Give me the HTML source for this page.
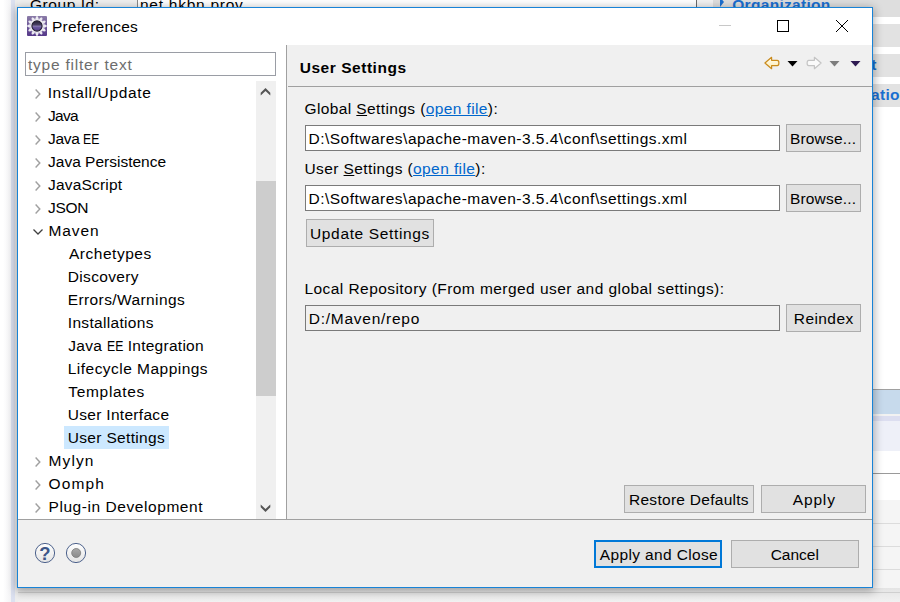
<!DOCTYPE html>
<html lang="en"><head><meta charset="utf-8"><title>Preferences</title>
<style>
html,body{margin:0;padding:0;}
body{width:900px;height:602px;overflow:hidden;position:relative;background:#fff;font-family:"Liberation Sans",sans-serif;font-size:16px;color:#000;}
.abs{position:absolute;}
.tx{position:absolute;white-space:pre;line-height:20px;font-size:15.5px;}
.lk{color:#0066cc;text-decoration:underline;}
u{text-decoration:underline;}
.ee{display:inline-block;width:16.4px;letter-spacing:0;transform:scaleX(0.79);transform-origin:0 50%;}
.btn{position:absolute;box-sizing:border-box;background:#e1e1e1;border:1px solid #adadad;}
.fld{position:absolute;box-sizing:border-box;background:#fff;border:1px solid #7a7a7a;}
.chev{position:absolute;width:8px;height:12px;}
</style></head><body>


<!-- background editor behind the dialog -->
<div class="abs" style="left:0;top:0;width:900px;height:602px;background:#fff;"></div>
<div class="abs" style="left:14px;top:0;width:124px;height:8px;background:#f0f0f0;"></div>
<div class="abs" style="left:11px;top:0;width:4px;height:602px;background:#dce1f0;"></div>
<div class="abs" style="left:137px;top:0;width:1px;height:8px;background:#8a8a8a;"></div>
<span id="bg1" class="tx " style="left:30.00px;top:-5.33px;letter-spacing:0.542px;">Group Id:</span><span id="bg2" class="tx " style="left:140.00px;top:-5.33px;letter-spacing:0.743px;">net.hkbn.prov</span>
<div class="abs" style="left:696px;top:0;width:1px;height:8px;background:#6a6a6a;"></div>
<div class="abs" style="left:697px;top:0;width:16px;height:8px;background:#f2f2f2;"></div>
<!-- right side stripes -->
<div class="abs" style="left:713px;top:0;width:187px;height:17px;background:#dedede;"></div>
<div class="abs" style="left:860px;top:24px;width:40px;height:23px;background:#e2e2e2;"></div>
<div class="abs" style="left:860px;top:54px;width:40px;height:23px;background:#e2e2e2;"></div>
<div class="abs" style="left:860px;top:84px;width:40px;height:23px;background:#e2e2e2;"></div>
<svg class="abs" style="left:719px;top:0;" width="8" height="8" viewBox="0 0 8 8"><path d="M1 -3 L5 2 L1 7 Z" fill="#1b6fd0"/></svg>
<span id="bg3" class="tx " style="left:732.26px;top:-5.33px;letter-spacing:0.305px;font-weight:700;color:#1a6fd0;">Organization</span>
<span id="bg4" class="tx" style="right:23.5px;top:54.5px;font-weight:700;color:#1a6fd0;">Issue Management</span>
<span class="tx" style="right:29px;top:84.5px;font-weight:700;color:#1a6fd0;">Continuous Integr</span>
<span id="bg5" class="tx" style="left:871px;top:84.5px;font-weight:700;color:#1a6fd0;letter-spacing:0.3px;">ation</span>
<div class="abs" style="left:873px;top:389px;width:27px;height:1px;background:#a0a0a0;"></div>
<div class="abs" style="left:873px;top:390px;width:27px;height:24px;background:#c7daec;"></div>
<div class="abs" style="left:873px;top:414px;width:27px;height:2px;background:#f2f2f2;"></div>
<div class="abs" style="left:873px;top:416px;width:27px;height:5px;background:#dcdef0;"></div>
<div class="abs" style="left:873px;top:421px;width:27px;height:30px;background:#eef0f8;"></div>
<div class="abs" style="left:873px;top:473px;width:27px;height:1px;background:#9a9a9a;"></div>
<div class="abs" style="left:873px;top:500px;width:27px;height:102px;background:#f5f5f5;"></div>
<div class="abs" style="left:873px;top:523px;width:27px;height:1px;background:#dcdcdc;"></div>
<div class="abs" style="left:873px;top:546px;width:27px;height:1px;background:#dcdcdc;"></div>
<div class="abs" style="left:873px;top:569px;width:27px;height:1px;background:#dcdcdc;"></div>
<div class="abs" style="left:15px;top:588px;width:885px;height:14px;background:linear-gradient(#e4e4e4,#f1f1f1);"></div>
<div class="abs" style="left:18px;top:592px;width:882px;height:1px;background:#cfcfcf;"></div>
<div class="abs" style="left:15px;top:0;width:3px;height:602px;background:#eeeeee;"></div>
<div class="abs" style="left:3px;top:0;width:8px;height:602px;background:linear-gradient(90deg,#ffffff,#f3f3f5);"></div>


<!-- dialog -->
<div id="win" class="abs" style="left:17px;top:7px;width:856px;height:581px;box-sizing:border-box;border:1px solid #1883d7;background:#f0f0f0;box-shadow:0 2px 9px 1px rgba(0,0,0,0.32);"></div>
<div class="abs" style="left:18px;top:8px;width:854px;height:37px;background:#fff;"></div>
<div class="abs" style="left:18px;top:45px;width:268px;height:474px;background:#fff;"></div>
<div class="abs" style="left:286px;top:45px;width:1px;height:474px;background:#a0a0a0;"></div>
<div class="abs" style="left:288px;top:86px;width:584px;height:1px;background:#a0a0a0;"></div>
<div class="abs" style="left:18px;top:519px;width:854px;height:1px;background:#a0a0a0;"></div>


<svg class="abs" style="left:27px;top:16px;" width="20" height="20" viewBox="0 0 20 20">
<defs><linearGradient id="pg" x1="0" y1="0" x2="0" y2="1"><stop offset="0" stop-color="#8b7ca8"/><stop offset="0.5" stop-color="#6c5797"/><stop offset="1" stop-color="#56388a"/></linearGradient>
<linearGradient id="cg" x1="0" y1="0" x2="0" y2="1"><stop offset="0" stop-color="#262236"/><stop offset="0.42" stop-color="#4a4266"/><stop offset="0.5" stop-color="#9183b6"/><stop offset="0.6" stop-color="#6b5aa0"/><stop offset="1" stop-color="#513c88"/></linearGradient></defs>
<rect x="0" y="0" width="20" height="20" rx="1" fill="url(#pg)"/>
<path d="M8.10 3.20 L9.25 0.30 L10.75 0.30 L11.90 3.20 Z M11.75 3.16 L14.20 1.22 L15.50 1.97 L15.05 5.06 Z M14.94 4.95 L18.03 4.50 L18.78 5.80 L16.84 8.25 Z M16.80 8.10 L19.70 9.25 L19.70 10.75 L16.80 11.90 Z M16.84 11.75 L18.78 14.20 L18.03 15.50 L14.94 15.05 Z M15.05 14.94 L15.50 18.03 L14.20 18.78 L11.75 16.84 Z M11.90 16.80 L10.75 19.70 L9.25 19.70 L8.10 16.80 Z M8.25 16.84 L5.80 18.78 L4.50 18.03 L4.95 14.94 Z M5.06 15.05 L1.97 15.50 L1.22 14.20 L3.16 11.75 Z M3.20 11.90 L0.30 10.75 L0.30 9.25 L3.20 8.10 Z M3.16 8.25 L1.22 5.80 L1.97 4.50 L5.06 4.95 Z M4.95 5.06 L4.50 1.97 L5.80 1.22 L8.25 3.16 Z" fill="#eceaf2"/>
<circle cx="10" cy="10" r="7.0" fill="#f6f5f9"/>
<circle cx="10" cy="10" r="5.1" fill="url(#cg)" stroke="#221d30" stroke-width="1.1"/>
</svg>

<span id="title" class="tx " style="left:52.00px;top:16.67px;letter-spacing:0.229px;">Preferences</span>

<div class="abs" style="left:719px;top:25px;width:12px;height:1px;background:#c8c8c8;"></div>
<div class="abs" style="left:777px;top:20px;width:12px;height:12px;box-sizing:border-box;border:1px solid #000;"></div>
<svg class="abs" style="left:835px;top:19px;" width="14" height="14" viewBox="0 0 14 14"><path d="M1 1 L13 13 M13 1 L1 13" stroke="#000" stroke-width="1" fill="none"/></svg>

<div class="fld" style="left:25px;top:52px;width:251px;height:24px;border-color:#9a9da5;"></div>
<span id="filter" class="tx " style="left:28.00px;top:54.67px;letter-spacing:0.776px;color:#6d6d6d;">type filter text</span>
<div class="abs" style="left:64px;top:426px;width:105px;height:23px;background:#cce8ff;"></div>
<svg class="abs" style="left:33.6px;top:88px;" width="8" height="12" viewBox="0 0 8 12"><path d="M1.6 1.5 L5.8 6 L1.6 10.5" stroke="#a0a0a0" stroke-width="1.45" fill="none"/></svg>
<span id="t0" class="tx " style="left:47.65px;top:82.67px;letter-spacing:0.644px;">Install/Update</span>
<svg class="abs" style="left:33.6px;top:111px;" width="8" height="12" viewBox="0 0 8 12"><path d="M1.6 1.5 L5.8 6 L1.6 10.5" stroke="#a0a0a0" stroke-width="1.45" fill="none"/></svg>
<span id="t1" class="tx " style="left:48.00px;top:105.67px;letter-spacing:-0.683px;">Java</span>
<svg class="abs" style="left:33.6px;top:134px;" width="8" height="12" viewBox="0 0 8 12"><path d="M1.6 1.5 L5.8 6 L1.6 10.5" stroke="#a0a0a0" stroke-width="1.45" fill="none"/></svg>
<span id="t2" class="tx " style="left:48.00px;top:128.67px;letter-spacing:-0.329px;">Java <span class="ee">EE</span></span>
<svg class="abs" style="left:33.6px;top:157px;" width="8" height="12" viewBox="0 0 8 12"><path d="M1.6 1.5 L5.8 6 L1.6 10.5" stroke="#a0a0a0" stroke-width="1.45" fill="none"/></svg>
<span id="t3" class="tx " style="left:48.00px;top:151.67px;letter-spacing:0.004px;">Java Persistence</span>
<svg class="abs" style="left:33.6px;top:180px;" width="8" height="12" viewBox="0 0 8 12"><path d="M1.6 1.5 L5.8 6 L1.6 10.5" stroke="#a0a0a0" stroke-width="1.45" fill="none"/></svg>
<span id="t4" class="tx " style="left:48.00px;top:174.67px;letter-spacing:0.197px;">JavaScript</span>
<svg class="abs" style="left:33.6px;top:203px;" width="8" height="12" viewBox="0 0 8 12"><path d="M1.6 1.5 L5.8 6 L1.6 10.5" stroke="#a0a0a0" stroke-width="1.45" fill="none"/></svg>
<span id="t5" class="tx " style="left:48.00px;top:197.67px;letter-spacing:-0.311px;">JSON</span>
<svg class="abs" style="left:31.5px;top:227.5px;" width="12" height="8" viewBox="0 0 12 8"><path d="M1.5 1.5 L6 6 L10.5 1.5" stroke="#404040" stroke-width="1.3" fill="none"/></svg>
<span id="t6" class="tx " style="left:48.50px;top:220.67px;letter-spacing:0.914px;">Maven</span>
<span id="t7" class="tx " style="left:68.95px;top:243.67px;letter-spacing:0.529px;">Archetypes</span>
<span id="t8" class="tx " style="left:67.75px;top:266.67px;letter-spacing:0.339px;">Discovery</span>
<span id="t9" class="tx " style="left:67.75px;top:289.67px;letter-spacing:0.396px;">Errors/Warnings</span>
<span id="t10" class="tx " style="left:67.75px;top:312.67px;letter-spacing:0.326px;">Installations</span>
<span id="t11" class="tx " style="left:68.35px;top:335.67px;letter-spacing:0.268px;">Java <span class="ee">EE</span> Integration</span>
<span id="t12" class="tx " style="left:67.75px;top:358.67px;letter-spacing:0.473px;">Lifecycle Mappings</span>
<span id="t13" class="tx " style="left:68.35px;top:381.67px;letter-spacing:0.660px;">Templates</span>
<span id="t14" class="tx " style="left:67.75px;top:404.67px;letter-spacing:0.303px;">User Interface</span>
<span id="t15" class="tx " style="left:67.75px;top:427.67px;letter-spacing:0.331px;">User Settings</span>
<svg class="abs" style="left:33.6px;top:456px;" width="8" height="12" viewBox="0 0 8 12"><path d="M1.6 1.5 L5.8 6 L1.6 10.5" stroke="#a0a0a0" stroke-width="1.45" fill="none"/></svg>
<span id="t16" class="tx " style="left:48.50px;top:450.67px;letter-spacing:1.123px;">Mylyn</span>
<svg class="abs" style="left:33.6px;top:479px;" width="8" height="12" viewBox="0 0 8 12"><path d="M1.6 1.5 L5.8 6 L1.6 10.5" stroke="#a0a0a0" stroke-width="1.45" fill="none"/></svg>
<span id="t17" class="tx " style="left:48.50px;top:473.67px;letter-spacing:1.151px;">Oomph</span>
<svg class="abs" style="left:33.6px;top:502px;" width="8" height="12" viewBox="0 0 8 12"><path d="M1.6 1.5 L5.8 6 L1.6 10.5" stroke="#a0a0a0" stroke-width="1.45" fill="none"/></svg>
<span id="t18" class="tx " style="left:48.50px;top:496.67px;letter-spacing:0.564px;">Plug-in Development</span>

<div class="abs" style="left:256px;top:81px;width:20px;height:438px;background:#f0f0f0;"></div>
<div class="abs" style="left:256px;top:181px;width:20px;height:215px;background:#cdcdcd;"></div>
<svg class="abs" style="left:260px;top:88px;" width="11" height="8" viewBox="0 0 11 8"><path d="M5.5 0 L10.3 4.7 L10.3 7.4 L5.5 2.9 L0.7 7.4 L0.7 4.7 Z" fill="#555"/></svg>
<svg class="abs" style="left:260px;top:504px;" width="11" height="8" viewBox="0 0 11 8"><path d="M5.5 8 L10.3 3.3 L10.3 0.6 L5.5 5.1 L0.7 0.6 L0.7 3.3 Z" fill="#555"/></svg>

<span id="h1" class="tx " style="left:299.70px;top:57.67px;letter-spacing:0.537px;font-weight:700;">User Settings</span>

<!-- toolbar -->
<svg class="abs" style="left:763px;top:56px;" width="18" height="14" viewBox="0 0 18 14">
<defs><linearGradient id="yg" x1="0" y1="0" x2="0" y2="1"><stop offset="0" stop-color="#fffdf2"/><stop offset="1" stop-color="#fdebb0"/></linearGradient></defs>
<path d="M1.9 7 L8.6 1.3 L8.6 4.3 L14.2 4.3 Q15.9 4.3 15.9 7 Q15.9 9.7 14.2 9.7 L8.6 9.7 L8.6 12.7 Z" fill="url(#yg)" stroke="#c98a1c" stroke-width="1.2" stroke-linejoin="round"/></svg>
<svg class="abs" style="left:787px;top:61px;" width="11" height="6" viewBox="0 0 11 6"><path d="M0.5 0 L10.5 0 L5.5 5.5 Z" fill="#000"/></svg>
<svg class="abs" style="left:805px;top:56px;" width="18" height="14" viewBox="0 0 18 14">
<path d="M16.1 7 L9.4 1.3 L9.4 4.3 L3.8 4.3 Q2.1 4.3 2.1 7 Q2.1 9.7 3.8 9.7 L9.4 9.7 L9.4 12.7 Z" fill="#fafafa" stroke="#c4c4c4" stroke-width="1.2" stroke-linejoin="round"/></svg>
<svg class="abs" style="left:829px;top:61px;" width="11" height="6" viewBox="0 0 11 6"><path d="M0.5 0 L10.5 0 L5.5 5.5 Z" fill="#7d7d7d"/></svg>
<svg class="abs" style="left:850px;top:61px;" width="11" height="6" viewBox="0 0 11 6"><path d="M0.5 0 L10.5 0 L5.5 5.5 Z" fill="#2e1a52"/></svg>

<span id="l1" class="tx " style="left:304.50px;top:98.67px;letter-spacing:0.390px;">Global <u>S</u>ettings (<span class="lk">open file</span>):</span>
<div class="fld" style="left:305px;top:125px;width:475px;height:26px;"></div>
<span id="f1" class="tx " style="left:308.50px;top:128.67px;letter-spacing:0.489px;">D:\Softwares\apache-maven-3.5.4\conf\settings.xml</span>
<div class="btn" style="left:786px;top:124px;width:75px;height:28px;"></div>
<span id="b1" class="tx " style="left:790.00px;top:128.67px;letter-spacing:0.166px;">Browse...</span>
<span id="l2" class="tx " style="left:304.50px;top:158.67px;letter-spacing:0.403px;">User <u>S</u>ettings (<span class="lk">open file</span>):</span>
<div class="fld" style="left:305px;top:185px;width:475px;height:26px;"></div>
<span id="f2" class="tx " style="left:308.50px;top:188.67px;letter-spacing:0.489px;">D:\Softwares\apache-maven-3.5.4\conf\settings.xml</span>
<div class="btn" style="left:786px;top:184px;width:75px;height:28px;"></div>
<span id="b2" class="tx " style="left:790.00px;top:188.67px;letter-spacing:0.166px;">Browse...</span>
<div class="btn" style="left:306px;top:219px;width:128px;height:28px;"></div>
<span id="b3" class="tx " style="left:310.00px;top:223.67px;letter-spacing:0.647px;">Update Settings</span>
<span id="l3" class="tx " style="left:304.50px;top:278.67px;letter-spacing:0.438px;">Local Repository (From merged user and global settings):</span>
<div class="fld" style="left:305px;top:305px;width:475px;height:26px;background:#f0f0f0;"></div>
<span id="f3" class="tx " style="left:308.80px;top:308.67px;letter-spacing:0.741px;">D:/Maven/repo</span>
<div class="btn" style="left:786px;top:304px;width:75px;height:28px;"></div>
<span id="b4" class="tx " style="left:793.80px;top:308.67px;letter-spacing:0.418px;">Reindex</span>
<div class="btn" style="left:624px;top:485px;width:130px;height:28px;"></div>
<span id="b5" class="tx " style="left:629.00px;top:489.67px;letter-spacing:0.278px;">Restore Defaults</span>
<div class="btn" style="left:761px;top:485px;width:105px;height:28px;"></div>
<span id="b6" class="tx " style="left:792.82px;top:489.67px;letter-spacing:0.824px;">Apply</span>
<div class="btn" style="left:594px;top:540px;width:128px;height:28px;border:2px solid #0078d7;"></div>
<span id="b7" class="tx " style="left:599.80px;top:544.67px;letter-spacing:0.362px;">Apply and Close</span>
<div class="btn" style="left:731px;top:540px;width:128px;height:28px;"></div>
<span id="b8" class="tx " style="left:770.70px;top:544.67px;letter-spacing:-0.008px;">Cancel</span>

<svg class="abs" style="left:34px;top:542px;" width="22" height="22" viewBox="0 0 22 22">
<defs><linearGradient id="hg" x1="0" y1="0" x2="0" y2="1"><stop offset="0" stop-color="#ffffff"/><stop offset="1" stop-color="#e4e4e4"/></linearGradient></defs>
<circle cx="11" cy="11" r="9.6" fill="url(#hg)" stroke="#4d628c" stroke-width="1"/>
<text x="11" y="17.6" text-anchor="middle" font-family="Liberation Sans, sans-serif" font-weight="700" font-size="18.5" fill="#3d5688">?</text>
</svg>
<svg class="abs" style="left:65px;top:542px;" width="22" height="22" viewBox="0 0 22 22">
<defs><linearGradient id="sg" x1="0" y1="0" x2="0" y2="1"><stop offset="0" stop-color="#a8a8a8"/><stop offset="1" stop-color="#8a8a8a"/></linearGradient></defs>
<circle cx="11" cy="11" r="9.6" fill="url(#hg)" stroke="#4d628c" stroke-width="1"/>
<circle cx="11.2" cy="11" r="4.5" fill="url(#sg)" stroke="#7c7c7c" stroke-width="0.8"/>
</svg>

</body></html>
